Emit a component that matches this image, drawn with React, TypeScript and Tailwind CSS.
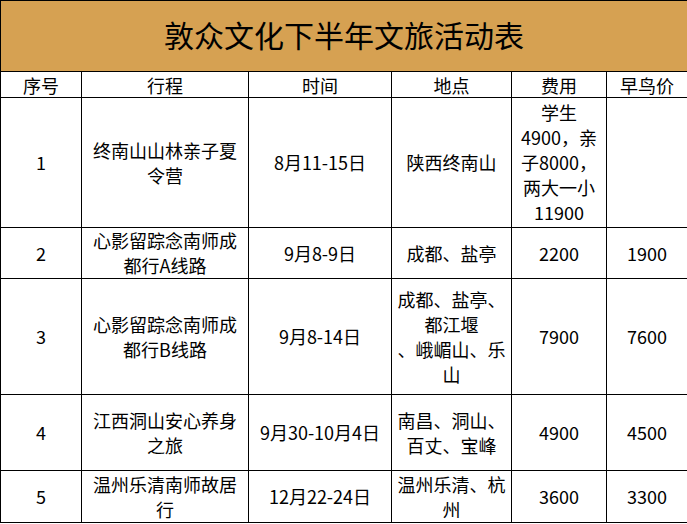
import React from 'react';

interface Trip {
  no: string;
  route: string[];
  time: string;
  place: string[];
  fee: string[];
  early: string;
  height: string;
}

const trips: Trip[] = [
  { no: '1', route: ['终南山山林亲子夏', '令营'], time: '8月11-15日', place: ['陕西终南山'], fee: ['学生', '4900，亲', '子8000，', '两大一小', '11900'], early: '', height: 'h-[130px]' },
  { no: '2', route: ['心影留踪念南师成', '都行A线路'], time: '9月8-9日', place: ['成都、盐亭'], fee: ['2200'], early: '1900', height: 'h-[51px]' },
  { no: '3', route: ['心影留踪念南师成', '都行B线路'], time: '9月8-14日', place: ['成都、盐亭、', '都江堰', '、峨嵋山、乐', '山'], fee: ['7900'], early: '7600', height: 'h-[116px]' },
  { no: '4', route: ['江西洞山安心养身', '之旅'], time: '9月30-10月4日', place: ['南昌、洞山、', '百丈、宝峰'], fee: ['4900'], early: '4500', height: 'h-[76px]' },
  { no: '5', route: ['温州乐清南师故居', '行'], time: '12月22-24日', place: ['温州乐清、杭', '州'], fee: ['3600'], early: '3300', height: 'h-[52px]' },
];

const headers = ['序号', '行程', '时间', '地点', '费用', '早鸟价'];

const Lines = ({ lines }: { lines: string[] }) => (
  <>
    {lines.map((l, i) => (
      <div key={i} className="whitespace-nowrap">{l}</div>
    ))}
  </>
);

const cell = 'border border-black text-center align-middle p-0 leading-[25px]';

export default function App() {
  return (
    <div className="w-[687px] h-[524px] bg-white text-black overflow-hidden" style={{ fontFamily: '"Noto Sans CJK SC", "Noto Sans", sans-serif' }}>
      <table className="w-[687px] table-fixed border-collapse text-[18px]">
        <colgroup>
          <col className="w-[81px]" />
          <col className="w-[167px]" />
          <col className="w-[143px]" />
          <col className="w-[120px]" />
          <col className="w-[95px]" />
          <col className="w-[81px]" />
        </colgroup>
        <tbody>
          <tr className="h-[71px]">
            <td colSpan={6} className="border border-black bg-[#d6a152] text-center align-middle text-[30px] leading-none p-0 pb-1">
              敦众文化下半年文旅活动表
            </td>
          </tr>
          <tr className="h-[26px]">
            {headers.map(h => (
              <td key={h} className="border border-black text-center align-middle p-0 leading-[24px]">{h}</td>
            ))}
          </tr>
          {trips.map(t => (
            <tr key={t.no} className={t.height}>
              <td className={cell}>{t.no}</td>
              <td className={cell}><Lines lines={t.route} /></td>
              <td className={cell}>{t.time}</td>
              <td className={cell}><Lines lines={t.place} /></td>
              <td className={cell}><Lines lines={t.fee} /></td>
              <td className={cell}>{t.early}</td>
            </tr>
          ))}
        </tbody>
      </table>
    </div>
  );
}
